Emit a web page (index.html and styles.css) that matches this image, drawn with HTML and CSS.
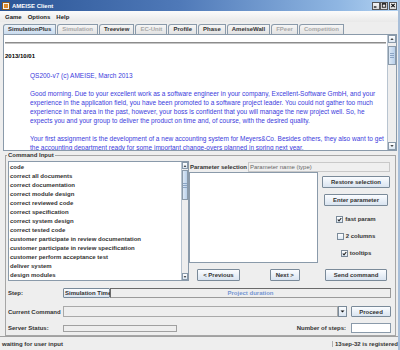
FILE: index.html
```html
<!DOCTYPE html>
<html>
<head>
<meta charset="utf-8">
<title>AMEISE Client</title>
<link rel="stylesheet" href="styles.css">
</head>
<body>
<div class="win">
  <div class="titlebar">
    <svg class="appicon" width="8" height="8" viewBox="0 0 8 8"><rect x="0.5" y="0.5" width="7" height="7" fill="#f4f4f4" stroke="#8a5a20"/><rect x="2" y="2" width="4" height="4" fill="#e08a2a"/></svg>
    <span class="title">AMEISE Client</span>
    <div class="wctl">
      <span class="wbtn"><svg width="7" height="7" viewBox="0 0 7 7"><rect x="1" y="4.5" width="3" height="1.5" fill="#111"/></svg></span>
      <span class="wbtn"><svg width="7" height="7" viewBox="0 0 7 7"><rect x="1.5" y="1.5" width="4" height="4" fill="none" stroke="#111"/><rect x="1" y="1" width="5" height="1.3" fill="#111"/></svg></span>
      <span class="wbtn gap"><svg width="7" height="7" viewBox="0 0 7 7"><path d="M1.5 1.5 L5.5 5.5 M5.5 1.5 L1.5 5.5" stroke="#111" stroke-width="1.3"/></svg></span>
    </div>
  </div>
  <div class="menubar"><span>Game</span><span>Options</span><span>Help</span></div>
  <div class="tabs">
    <span class="tab sel">SimulationPlus</span>
    <span class="tab dis">Simulation</span>
    <span class="tab">Treeview</span>
    <span class="tab dis">EC-Unit</span>
    <span class="tab">Profile</span>
    <span class="tab">Phase</span>
    <span class="tab">AmeiseWall</span>
    <span class="tab dis">FPeer</span>
    <span class="tab dis">Competition</span>
  </div>
  <div class="textpane">
    <div class="doc">
      <hr>
      <div class="date">2013/10/01</div>
      <div class="note">QS200-v7 (c) AMEISE, March 2013</div>
      <p>Good morning. Due to your excellent work as a software engineer in your company, Excellent-Software GmbH, and your<br>experience in the application field, you have been promoted to a software project leader. You could not gather too much<br>experience in that area in the past, however, your boss is confident that you will manage the new project well. So, he<br>expects you and your group to deliver the product on time and, of course, with the desired quality.</p>
      <p>Your first assignment is the development of a new accounting system for Meyers&amp;Co. Besides others, they also want to get<br>the accounting department ready for some important change-overs planned in spring next year.</p>
    </div>
    <div class="vscroll big">
      <div class="sbtn"><svg width="7" height="6" viewBox="0 0 7 6"><path d="M1.5 4 L3.5 2 L5.5 4 Z" fill="#111"/></svg></div>
      <div class="track"><div class="thumb"><i></i><i></i><i></i></div></div>
      <div class="sbtn"><svg width="7" height="6" viewBox="0 0 7 6"><path d="M1.5 2 L3.5 4 L5.5 2 Z" fill="#111"/></svg></div>
    </div>
  </div>
  <fieldset class="cmd">
    <legend>Command Input</legend>
    <div class="cmdtop">
      <div class="cmdlist">
        <ul class="items">
          <li>code</li>
          <li>correct all documents</li>
          <li>correct documentation</li>
          <li>correct module design</li>
          <li>correct reviewed code</li>
          <li>correct specification</li>
          <li>correct system design</li>
          <li>correct tested code</li>
          <li>customer participate in review documentation</li>
          <li>customer participate in review specification</li>
          <li>customer perform acceptance test</li>
          <li>deliver system</li>
          <li>design modules</li>
        </ul>
        <div class="vscroll small">
          <div class="sbtn"><svg width="6" height="6" viewBox="0 0 6 6"><path d="M1 4 L3 2 L5 4 Z" fill="#111"/></svg></div>
          <div class="track"><div class="thumb"><i></i><i></i><i></i></div></div>
          <div class="sbtn"><svg width="6" height="6" viewBox="0 0 6 6"><path d="M1 2 L3 4 L5 2 Z" fill="#111"/></svg></div>
        </div>
      </div>
      <div class="phead"><b>Parameter selection</b><span class="pcol">Parameter name (type)</span></div>
      <div class="plist"></div>
      <div class="side">
        <button class="btn">Restore selection</button>
        <button class="btn">Enter parameter</button>
        <label class="chk"><span class="box on"><svg width="5" height="5" viewBox="0 0 5 5"><path d="M0.8 2.5 L2 3.8 L4.3 1" fill="none" stroke="#222" stroke-width="1.1"/></svg></span>fast param</label>
        <label class="chk"><span class="box"></span>2 columns</label>
        <label class="chk"><span class="box on"><svg width="5" height="5" viewBox="0 0 5 5"><path d="M0.8 2.5 L2 3.8 L4.3 1" fill="none" stroke="#222" stroke-width="1.1"/></svg></span>tooltips</label>
      </div>
      <div class="nav">
        <button class="btn">&lt; Previous</button>
        <button class="btn">Next &gt;</button>
      </div>
      <div class="send"><button class="btn">Send command</button></div>
    </div>
    <div class="row step">
      <span class="lbl">Step:</span>
      <button class="btn simtime">Simulation Time</button>
      <div class="progress">Project duration</div>
    </div>
    <div class="row cur">
      <span class="lbl">Current Command</span>
      <div class="combo"></div>
      <div class="arrow"><svg width="7" height="7" viewBox="0 0 7 7"><path d="M1.5 2.5 L3.5 4.5 L5.5 2.5 Z" fill="#111"/></svg></div>
      <button class="btn proceed">Proceed</button>
    </div>
    <div class="row server">
      <span class="lbl">Server Status:</span>
      <div class="sfield"></div>
      <span class="nlbl">Number of steps:</span>
      <div class="nfield"></div>
    </div>
  </fieldset>
  <div class="statusbar">
    <span class="sleft">waiting for user input</span>
    <span class="sright">13sep-32 is registered</span>
  </div>
</div>
</body>
</html>
```

FILE: styles.css
```css
* { box-sizing: border-box; margin: 0; padding: 0; }
html, body { width: 400px; height: 350px; overflow: hidden; }
body {
  background: #eeeeee;
  font-family: "Liberation Sans", Arial, sans-serif;
  font-size: 6px;
  color: #333333;
}
.win {
  width: 400px;
  height: 350px;
  display: flex;
  flex-direction: column;
  border-right: 2px solid #a9bfd9;
}

/* title bar */
.titlebar {
  height: 11px;
  display: flex;
  align-items: center;
  padding-left: 2px;
  background: linear-gradient(to right, #2b5596 0%, #4f79b8 45%, #8fb6e2 85%, #b3d3f2 100%);
}
.appicon { display: block; }
.title { color: #ffffff; font-weight: bold; margin-left: 2px; line-height: 8px; }
.wctl { margin-left: auto; display: flex; padding-right: 1px; }
.wbtn {
  width: 8px;
  height: 8px;
  display: flex;
  align-items: center;
  justify-content: center;
  background: linear-gradient(#f4f4f4, #d8d8d8);
  border: 1px solid #555555;
}
.wbtn.gap { margin-left: 1px; }

/* menu */
.menubar {
  height: 11px;
  display: flex;
  align-items: center;
  padding-left: 2px;
  background: linear-gradient(#fbfbfb, #e9e9e9);
  font-weight: bold;
  color: #222222;
}
.menubar span { padding: 0 3px; }

/* tabs */
.tabs {
  height: 12px;
  display: flex;
  align-items: flex-end;
  padding-left: 3px;
}
.tab {
  height: 10px;
  line-height: 9px;
  padding: 0 4px;
  border: 1px solid #8a9aaa;
  border-bottom: none;
  border-radius: 3px 0 0 0;
  margin-right: 1px;
  font-weight: bold;
  color: #333333;
  background: linear-gradient(#f6f6f6, #e2e2e2);
}
.tab.sel { background: linear-gradient(#edf3f9, #c9dbee); }
.tab.dis { color: #a8a8a8; }

/* text pane */
.textpane {
  height: 117px;
  width: 394px;
  margin-left: 3px;
  border: 1px solid #8a9aaa;
  background: #ffffff;
  display: flex;
}
.doc {
  flex: 1;
  overflow: hidden;
  padding: 7px 1px 0 1px;
  font-size: 6.5px;
  line-height: 9px;
  color: #3b3bdc;
}
.doc hr {
  border: 0;
  border-top: 1px solid #8c8c8c;
  border-bottom: 1px solid #c4c4c4;
  height: 2px;
  margin-bottom: 8px;
}
.date { font-weight: bold; color: #000000; font-size: 6px; }
.note { margin: 10px 0 0 25px; }
.doc p { margin: 9px 0 0 25px; white-space: nowrap; }

/* scrollbars */
.vscroll {
  width: 9px;
  display: flex;
  flex-direction: column;
  background: #eeeeee;
  border-left: 1px solid #b8c4d0;
}
.vscroll.small { width: 7px; }
.sbtn {
  height: 8px;
  display: flex;
  align-items: center;
  justify-content: center;
  background: linear-gradient(#ffffff, #dde8f3);
  border: 1px solid #8a9aaa;
}
.small .sbtn { height: 7px; }
.track { flex: 1; padding-top: 3px; }
.small .track { padding-top: 1px; }
.thumb {
  height: 19px;
  border: 1px solid #8a9aaa;
  background: linear-gradient(to right, #dce8f5, #b9d0ea);
  display: flex;
  flex-direction: column;
  align-items: center;
  justify-content: center;
  gap: 1px;
}
.small .thumb { height: 30px; }
.thumb i { display: block; width: 4px; height: 1px; background: #8aa4c4; }

/* command input group */
.cmd {
  border: 1px solid #a6a6a6;
  margin: 0 0 0 5px;
  width: 391px;
  min-width: 0;
  padding: 2px 4px 2px 2px;
}
.cmd legend {
  font-weight: bold;
  line-height: 8px;
  padding: 0 1px;
  margin-left: -1px;
  color: #333333;
}
.cmdtop {
  display: grid;
  grid-template-columns: 181px 129px 72px;
  grid-template-rows: 11px 91px 18px;
  height: 120px;
}
.cmdlist {
  grid-row: 1 / 4;
  grid-column: 1;
  display: flex;
  border: 1px solid #8a9aaa;
  background: #ffffff;
}
.items {
  list-style: none;
  flex: 1;
  padding: 1px 0 0 1px;
  font-weight: bold;
  line-height: 9px;
  color: #333333;
  overflow: hidden;
  white-space: nowrap;
}
.phead {
  grid-row: 1;
  grid-column: 2 / 4;
  display: flex;
  align-items: center;
}
.phead b { padding: 0 1px 0 1px; color: #333333; }
.pcol {
  flex: 1;
  height: 10px;
  line-height: 8px;
  border: 1px solid #c9c9c9;
  background: #efefef;
  color: #666666;
  padding-left: 1px;
}
.plist {
  grid-row: 2;
  grid-column: 2;
  background: #ffffff;
  border: 1px solid #8a9aaa;
}
.side {
  grid-row: 2;
  grid-column: 3;
  display: flex;
  flex-direction: column;
  align-items: center;
  padding: 4px 0 0 4px;
}
.btn {
  font-family: "Liberation Sans", Arial, sans-serif;
  font-size: 6px;
  font-weight: bold;
  color: #333333;
  height: 12px;
  padding: 0 8px;
  border: 1px solid #7a8a99;
  border-radius: 1px;
  background: linear-gradient(#fbfdff, #d9e4f0);
  white-space: nowrap;
}
.side .btn + .btn { margin-top: 6px; }
.chk {
  display: flex;
  align-items: center;
  font-weight: bold;
  height: 8px;
  margin-top: 9px;
}
.box {
  width: 7px;
  height: 7px;
  border: 1px solid #7a8a99;
  background: linear-gradient(#ffffff, #dde8f3);
  margin-right: 2px;
  display: flex;
  align-items: center;
  justify-content: center;
}
.nav {
  grid-row: 3;
  grid-column: 2;
  display: flex;
  justify-content: center;
  align-items: flex-end;
  gap: 30px;
  padding-right: 10px;
}
.nav .btn { padding: 0 5px; }
.send {
  grid-row: 3;
  grid-column: 3;
  display: flex;
  justify-content: center;
  align-items: flex-end;
  padding-left: 4px;
}

/* bottom rows */
.row { display: flex; align-items: center; }
.lbl { width: 55px; font-weight: bold; color: #333333; }
.step { margin-top: 7px; height: 10px; }
.simtime { height: 10px; padding: 0 1px; width: 47px; }
.progress {
  flex: 1;
  height: 10px;
  border: 1px solid #6a6a6a;
  border-right-color: #9a9a9a;
  border-bottom-color: #9a9a9a;
  background: #eeeeee;
  color: #7595d2;
  font-weight: bold;
  text-align: center;
  line-height: 8px;
}
.cur { margin-top: 8px; height: 11px; }
.combo {
  flex: 1;
  height: 11px;
  border: 1px solid #a9a9a9;
  background: #eeeeee;
}
.arrow {
  width: 9px;
  height: 11px;
  border: 1px solid #7a8a99;
  background: linear-gradient(#fbfdff, #d9e4f0);
  display: flex;
  align-items: center;
  justify-content: center;
}
.proceed { margin-left: 4px; height: 11px; width: 40px; padding: 0; }
.server { margin-top: 6px; height: 10px; }
.sfield {
  width: 114px;
  height: 7px;
  border: 1px solid #a0a0a0;
  background: #eeeeee;
}
.nlbl { margin-left: auto; font-weight: bold; color: #333333; }
.nfield {
  width: 40px;
  height: 10px;
  margin-left: 5px;
  border: 1px solid #8a9aaa;
  background: #ffffff;
}

/* status bar */
.statusbar {
  flex: 1;
  display: flex;
  align-items: center;
  border-top: 1px solid #a0a0a0;
  font-weight: bold;
  color: #333333;
  padding-left: 2px;
}
.sright {
  margin-left: auto;
  border-left: 1px solid #b0b0b0;
  padding-left: 2px;
}
```
